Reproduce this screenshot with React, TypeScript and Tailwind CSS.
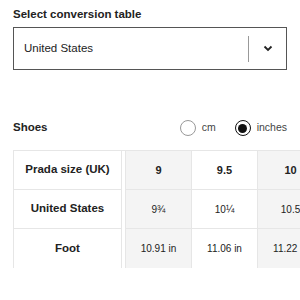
import React from 'react';

const cols = [
  { uk: '9', us: '9¾', foot: '10.91 in', shade: true },
  { uk: '9.5', us: '10¼', foot: '11.06 in', shade: false },
  { uk: '10', us: '10.5', foot: '11.22 in', shade: true },
  { uk: '10.5', us: '11', foot: '11.38 in', shade: false },
];

export default function App() {
  return (
    <div
      className="w-[300px] h-[300px] overflow-hidden bg-white text-[#222]"
      style={{ fontFamily: '"Liberation Sans", Arial, sans-serif' }}
    >
      <div className="px-[13px] pt-[7px]">
        <div className="text-[11.5px] font-bold leading-[14px]">Select conversion table</div>
        <div className="mt-[6px] flex h-[43px] items-center border-[1.5px] border-[#555] pl-[10px]">
          <span className="flex-1 text-[11.5px]">United States</span>
          <div className="h-[26px] w-px bg-[#999]" />
          <div className="flex w-[37px] justify-center">
            <svg width="10" height="7" viewBox="0 0 10 7" fill="none">
              <path d="M1.5 1.5 5 5l3.5-3.5" stroke="#222" strokeWidth="1.8" />
            </svg>
          </div>
        </div>

        <div className="mt-[49px] flex h-[18px] items-center">
          <span className="flex-1 text-[11.5px] font-bold">Shoes</span>
          <div className="flex items-center gap-[6px]">
            <span className="h-[16px] w-[16px] rounded-full border border-[#999]" />
            <span className="text-[10.5px] text-[#444]">cm</span>
          </div>
          <div className="ml-[19px] flex items-center gap-[6px]">
            <span className="flex h-[16px] w-[16px] items-center justify-center rounded-full border-[1.5px] border-[#111]">
              <span className="h-[9px] w-[9px] rounded-full bg-[#111]" />
            </span>
            <span className="text-[10.5px] text-[#444]">inches</span>
          </div>
        </div>
      </div>

      <div className="ml-[13px] mt-[13px] flex border-t border-[#e6e6e6]">
        <div className="w-[109px] shrink-0 border-x border-[#e6e6e6] text-[11.5px] font-bold">
          <div className="flex h-[39px] items-center justify-center border-b border-[#e6e6e6]">Prada size (UK)</div>
          <div className="flex h-[39px] items-center justify-center border-b border-[#e6e6e6]">United States</div>
          <div className="flex h-[39px] items-center justify-center">Foot</div>
        </div>
        <div className="w-[3px] shrink-0" />
        {cols.map((c) => (
          <div
            key={c.uk}
            className={`w-[66px] shrink-0 border-l border-[#e6e6e6] ${c.shade ? 'bg-[#f4f4f4]' : 'bg-white'}`}
          >
            <div className="flex h-[39px] items-center justify-center border-b border-[#e6e6e6] text-[11px] font-bold">
              {c.uk}
            </div>
            <div className="flex h-[39px] items-center justify-center border-b border-[#e6e6e6] text-[10px]">
              {c.us}
            </div>
            <div className="flex h-[39px] items-center justify-center text-[10px] whitespace-nowrap">
              {c.foot}
            </div>
          </div>
        ))}
      </div>
    </div>
  );
}
